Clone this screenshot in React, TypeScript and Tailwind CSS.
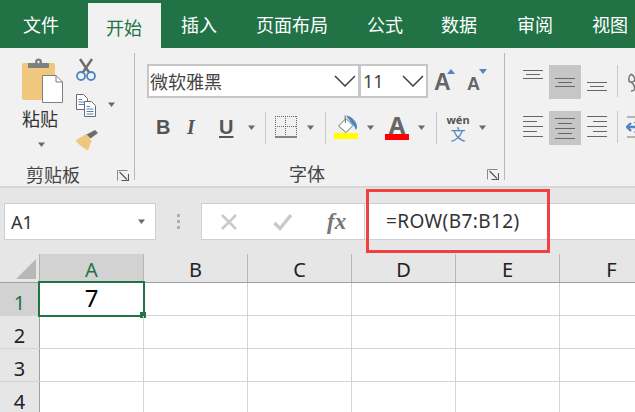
import React from "react";

const CJK = "font-['Noto_Sans_CJK_SC','Noto_Sans',sans-serif]";
const LATIN = "font-['Noto_Sans','Noto_Sans_CJK_SC',sans-serif]";

function Caret({ className = "" }: { className?: string }) {
  return (
    <svg width="10" height="6" viewBox="0 0 10 6" className={`shrink-0 ${className}`}>
      <path d="M1 0.5h7L4.5 5z" fill="#6a6a6a" />
    </svg>
  );
}

function Chevron({ className = "" }: { className?: string }) {
  return (
    <svg width="22" height="12" viewBox="0 0 22 12" className={`shrink-0 ${className}`}>
      <path d="M1 1 L11 11 L21 1" fill="none" stroke="#404040" strokeWidth="1.5" />
    </svg>
  );
}

function Launcher({ className = "" }: { className?: string }) {
  return (
    <svg width="12" height="11" viewBox="0 0 12 11" className={`shrink-0 ${className}`}>
      <path d="M0.5 10.5V0.5H10.5" fill="none" stroke="#8a8a8a" />
      <path d="M2.5 2 L10 9.5 M4.5 10.5H11.5V4" fill="none" stroke="#555" strokeWidth="1.1" />
    </svg>
  );
}

function Paste() {
  return (
    <svg width="43" height="46" viewBox="0 0 43 46" className="shrink-0">
      <rect x="0" y="5" width="33" height="37" rx="2" fill="#efc77f" />
      <rect x="6" y="5" width="21" height="5" rx="1" fill="#7f7f7f" />
      <circle cx="16.5" cy="4" r="3.5" fill="#7f7f7f" />
      <circle cx="16.5" cy="4" r="1.2" fill="#f1f1f1" />
      <path d="M20.5 17.5H34L40.5 24V44.5H20.5Z" fill="#fff" stroke="#7f7f7f" />
      <path d="M34 17.5V24H40.5" fill="none" stroke="#7f7f7f" />
    </svg>
  );
}

function Scissors() {
  return (
    <svg width="22" height="23" viewBox="0 0 22 23" className="shrink-0">
      <path d="M5 1 L14.5 15 M17 1 L7.5 15" stroke="#6d6d6d" strokeWidth="2.4" fill="none" />
      <circle cx="6" cy="18" r="4" fill="none" stroke="#4f86c0" strokeWidth="1.8" />
      <circle cx="16" cy="18" r="4" fill="none" stroke="#4f86c0" strokeWidth="1.8" />
    </svg>
  );
}

function CopyIcon() {
  return (
    <svg width="22" height="24" viewBox="0 0 22 24" className="shrink-0">
      <path d="M1.5 1.5H8.5L12.5 5.5V16.5H1.5Z" fill="#fff" stroke="#6a6a6a" />
      <path d="M3.5 6.5H7M3.5 9H10M3.5 11.5H10" stroke="#4f86c0" />
      <path d="M9.5 8.5H16.5L20.5 12.5V23.5H9.5Z" fill="#fff" stroke="#6a6a6a" />
      <path d="M11.5 13.5H15M11.5 16H18.5M11.5 18.5H18.5M11.5 21H18.5" stroke="#4f86c0" />
    </svg>
  );
}

function Brush() {
  return (
    <svg width="24" height="21" viewBox="0 0 24 21" className="shrink-0">
      <path d="M0.5 10.5 L11 4 L16.5 11 L13 20.5 C8 18 3.5 14.5 0.5 10.5Z" fill="#efc77f" />
      <path d="M11.5 4.5 L15.5 8.5 L23 3 L20 0Z" fill="#6d6d6d" />
    </svg>
  );
}

function BorderIcon() {
  return (
    <svg width="22" height="22" viewBox="0 0 22 22" className="shrink-0">
      <path d="M0 0.5H22M0.5 0V20M21.5 0V20M10.5 0V20M0 10.5H22" fill="none" stroke="#666" strokeDasharray="1 1" />
      <path d="M0 21H22" stroke="#555" strokeWidth="1.4" />
    </svg>
  );
}

function FillIcon() {
  return (
    <svg width="25" height="25" viewBox="0 0 25 25" className="shrink-0 mb-[2px]">
      <path d="M4.5 11 L12 3.5 L19 10.5 L12 17.5Z" fill="#fff" stroke="#6d6d6d" />
      <path d="M11 0.5 L11.5 8" stroke="#6d6d6d" />
      <path d="M12 0.5 C17 1 21 5 22.5 9 C23.5 12 23 14 21.5 15 C21 12 20 10.5 18.5 9.5Z" fill="#4f86c0" />
      <rect x="0" y="18" width="24" height="6" fill="#ffff00" />
    </svg>
  );
}

function AlignLines({ widths, align, gap = 4 }: { widths: number[]; align: "start" | "center" | "end"; gap?: number }) {
  const cls = align === "start" ? "items-start" : align === "center" ? "items-center" : "items-end";
  return (
    <div className={`flex flex-col w-[20px] ${cls}`} style={{ gap }}>
      {widths.map((w, i) => (
        <div key={i} className="h-px bg-[#666]" style={{ width: w }} />
      ))}
    </div>
  );
}

const Sep = ({ className = "" }: { className?: string }) => <div className={`w-px shrink-0 bg-[#c8c8c8] ${className}`} />;

const tabs: [string, string][] = [
  ["文件", "ml-[4px] px-[19px] text-white"],
  ["开始", "ml-[10px] pl-[18px] pr-[19px] mt-[3px] h-[45px] bg-[#f1f1f1] text-[#217346]"],
  ["插入", "ml-[1px] pl-[19px] pr-[19px] text-white"],
  ["页面布局", "ml-[1px] px-[19px] text-white"],
  ["公式", "pl-[20px] pr-[18px] text-white"],
  ["数据", "pl-[20px] pr-[20px] text-white"],
  ["审阅", "pl-[20px] pr-[19px] text-white"],
  ["视图", "pl-[20px] pr-[20px] text-white"],
];

const cols = ["A", "B", "C", "D", "E", "F"];
const rows = [1, 2, 3, 4];

export default function App() {
  return (
    <div className={`w-[635px] h-[412px] overflow-hidden relative bg-white ${CJK}`}>
      {/* Tabs */}
      <div className="h-[48px] bg-[#217346] flex whitespace-nowrap">
        {tabs.map(([t, c]) => (
          <div key={t} className={`flex items-center justify-center h-[48px] text-[18px] shrink-0 ${c}`}>
            <span className="leading-none">{t}</span>
          </div>
        ))}
      </div>

      {/* Ribbon */}
      <div className="h-[140px] bg-[#f1f1f1] border-b-2 border-[#d6d6d6] flex">
        {/* Clipboard */}
        <div className="w-[134px] shrink-0 flex flex-col">
          <div className="h-[114px] shrink-0 flex">
            <div className="w-[75px] pl-[22px] pt-[10px] flex flex-col items-start">
              <Paste />
              <div className="text-[18px] leading-[24px] text-[#333] mt-[2px]">粘贴</div>
              <Caret className="ml-[15px] mt-[12px]" />
            </div>
            <div className="pt-[10px] flex flex-col">
              <Scissors />
              <div className="flex items-center mt-[12px]">
                <CopyIcon />
                <Caret className="ml-[10px]" />
              </div>
              <div className="mt-[13px]"><Brush /></div>
            </div>
          </div>
          <div className="flex-1 flex items-start">
            <div className="ml-[26px] text-[18px] leading-[24px] text-[#444]">剪贴板</div>
            <Launcher className="ml-[37px] mt-[8px]" />
          </div>
        </div>
        <Sep className="mt-[5px] h-[127px] !bg-[#b8b8b8]" />

        {/* Font */}
        <div className="w-[369px] shrink-0 flex flex-col">
          <div className="h-[64px] shrink-0 pt-[16px] pl-[12px] flex items-start">
            <div className="w-[213px] h-[34px] bg-white border-2 border-[#c6c6c6] flex items-center pl-[1px] pr-[2px] justify-between">
              <span className="text-[18px] leading-none text-[#444]">微软雅黑</span>
              <Chevron />
            </div>
            <div className="w-[69px] h-[34px] -ml-[1px] bg-white border-2 border-[#c6c6c6] flex items-center justify-between pl-[2px] pr-[2px]">
              <span className={`text-[18px] leading-none text-[#444] ${LATIN}`}>11</span>
              <Chevron />
            </div>
            <div className="relative w-[16px] h-[26px] ml-[6px] mt-[5px]">
              <span className="text-[23px] leading-[26px] font-bold text-[#666] font-['Liberation_Sans',sans-serif]">A</span>
              <svg width="8" height="5" viewBox="0 0 8 5" className="absolute top-[0px] right-[-5px]"><path d="M0 5L4 0L8 5Z" fill="#4f86c0" /></svg>
            </div>
            <div className="relative w-[14px] h-[26px] ml-[17px] mt-[5px]">
              <span className="text-[18px] leading-[30px] font-bold text-[#666] font-['Liberation_Sans',sans-serif]">A</span>
              <svg width="8" height="5" viewBox="0 0 8 5" className="absolute top-[0px] right-[-6px]"><path d="M0 0H8L4 5Z" fill="#4f86c0" /></svg>
            </div>
          </div>
          <div className="h-[32px] shrink-0 pl-[21px] flex items-center font-['Liberation_Sans',sans-serif] text-[#555]">
            <span className="w-[31px] text-[20px] font-bold leading-none -mt-[3px]">B</span>
            <span className="w-[32px] text-[20px] font-bold italic font-['Liberation_Serif',serif] leading-none -mt-[3px]">I</span>
            <span className="w-[27px] text-[20px] font-bold leading-none underline underline-offset-2 -mt-[3px]">U</span>
            <Caret className="ml-[1px] mr-[8px]" />
            <Sep className="h-[32px]" />
            <div className="ml-[9px] -mt-[3px]"><BorderIcon /></div>
            <Caret className="ml-[9px] mr-[9px]" />
            <Sep className="h-[32px]" />
            <div className="ml-[8px] flex"><FillIcon /></div>
            <Caret className="ml-[7px]" />
            <div className="relative w-[24px] h-[25px] ml-[9px] mb-[2px] flex justify-center shrink-0">
              <span className={`text-[24px] font-bold leading-[20px] text-[#666] ${LATIN}`}>A</span>
              <div className="absolute left-0 bottom-0 w-[24px] h-[6px] bg-[#ff0000]" />
            </div>
            <Caret className="ml-[8px] mr-[9px]" />
            <Sep className="h-[32px]" />
            <div className="ml-[9px] w-[24px] flex flex-col items-center -mt-[2px]">
              <span className="text-[11px] leading-[13px] font-bold text-[#555] font-['Noto_Sans',sans-serif]">wén</span>
              <span className={`text-[15px] leading-[15px] text-[#4f86c0] ${CJK}`}>文</span>
            </div>
            <Caret className="ml-[8px]" />
          </div>
          <div className="flex-1 pt-[17px] flex items-start">
            <span className="ml-[154px] text-[18px] leading-[24px] text-[#444]">字体</span>
            <Launcher className="ml-[162px] mt-[8px]" />
          </div>
        </div>
        <Sep className="mt-[5px] h-[127px] !bg-[#b8b8b8]" />

        {/* Alignment */}
        <div className="flex-1 pt-[17px] pl-[18px]">
          <div className="flex items-start">
            <div className="w-[26px] pt-[5px]"><AlignLines widths={[20, 14, 20]} align="center" gap={3} /></div>
            <div className="w-[32px] h-[34px] bg-[#c6c6c6] flex justify-center items-center"><AlignLines widths={[20, 14, 20]} align="center" gap={3} /></div>
            <div className="w-[26px] pl-[6px] pt-[17px]"><AlignLines widths={[20, 14, 20]} align="center" gap={3} /></div>
            <Sep className="ml-[10px] h-[32px]" />
            <svg width="17" height="22" viewBox="0 0 17 22" className="ml-[10px] mt-[6px] shrink-0">
              <path d="M3 3 C8 6 8 11 3 11 C0 11 0 6 3 3 M3 11 C8 15 8 20 3 20" fill="none" stroke="#777" strokeWidth="1.5" />
            </svg>
          </div>
          <div className="flex items-start mt-[12px]">
            <div className="w-[26px] pt-[5px]"><AlignLines widths={[20, 14, 20, 14, 20]} align="start" /></div>
            <div className="w-[32px] h-[34px] bg-[#c6c6c6] flex justify-center items-center"><AlignLines widths={[20, 14, 20, 14, 20]} align="center" /></div>
            <div className="w-[26px] pl-[6px] pt-[5px]"><AlignLines widths={[20, 14, 20, 14, 20]} align="end" /></div>
            <Sep className="ml-[10px] h-[32px]" />
            <svg width="17" height="26" viewBox="0 0 17 26" className="ml-[8px] mt-[4px] shrink-0">
              <path d="M1 12H9M5 8L1 12L5 16" fill="none" stroke="#4f86c0" strokeWidth="2.4" />
              <path d="M1 2H17M8 7.5H17M11 12H17M8 17H17M1 22H17" stroke="#777" />
            </svg>
          </div>
        </div>
      </div>

      {/* Formula bar */}
      <div className="h-[66px] bg-[#e6e6e6] flex items-start pt-[15px] pl-[4px]">
        <div className="w-[152px] h-[37px] bg-white border border-[#cfcfcf] flex items-center justify-between pl-[6px] pr-[8px]">
          <span className={`text-[18px] leading-none text-[#333] ${LATIN}`}>A1</span>
          <Caret />
        </div>
        <div className="w-[45px] h-[37px] flex flex-col items-center justify-center gap-[3px]">
          <div className="w-[3px] h-[3px] bg-[#b0b0b0]" />
          <div className="w-[3px] h-[3px] bg-[#b0b0b0]" />
          <div className="w-[3px] h-[3px] bg-[#b0b0b0]" />
        </div>
        <div className="flex-1 h-[37px] bg-white border-y border-l border-[#cfcfcf] flex items-center">
          <div className="w-[163px] h-full border-r border-[#cfcfcf] flex items-center shrink-0">
            <svg width="18" height="18" viewBox="0 0 18 18" className="ml-[18px] shrink-0">
              <path d="M2 2L16 16M16 2L2 16" stroke="#c9c9c9" strokeWidth="2.6" />
            </svg>
            <svg width="20" height="18" viewBox="0 0 20 18" className="ml-[35px] shrink-0">
              <path d="M1.5 10L7 15.5L18 2" fill="none" stroke="#c9c9c9" strokeWidth="3.4" />
            </svg>
            <span className="ml-[34px] text-[23px] leading-none font-bold italic text-[#777] font-['Liberation_Serif',serif]">fx</span>
          </div>
          <span className={`ml-[21px] text-[19px] leading-none tracking-[0.4px] text-[#333] ${LATIN}`}>=ROW(B7:B12)</span>
        </div>
      </div>

      {/* Grid */}
      <div className={LATIN}>
        <div className="flex h-[29px] bg-[#e6e6e6] border-b border-[#9f9f9f]">
          <div className="w-[40px] shrink-0 border-r border-[#b0b0b0] flex items-end pl-[16px] pb-[3px]">
            <svg width="20" height="20" viewBox="0 0 20 20" className="shrink-0"><path d="M20 0V20H0Z" fill="#b7b7b7" /></svg>
          </div>
          {cols.map((c, i) => (
            <div key={c} className={`w-[104px] shrink-0 pt-[4px] flex items-center justify-center text-[20px] leading-none border-r border-[#b8b8b8] ${i === 0 ? "bg-[#d2d2d2] text-[#217346]" : "text-[#222]"}`}>
              {c}
            </div>
          ))}
        </div>
        {rows.map((r) => (
          <div key={r} className="flex h-[33px] border-b border-[#d4d4d4]">
            <div className={`w-[40px] shrink-0 pt-[7px] flex items-center justify-center text-[20px] leading-none border-r border-[#9f9f9f] ${r === 1 ? "bg-[#d2d2d2] text-[#217346]" : "bg-[#e6e6e6] text-[#222]"}`}>
              {r}
            </div>
            {cols.map((c, i) => (
              <div key={c} className="w-[104px] shrink-0 border-r border-[#d4d4d4] relative">
                {r === 1 && i === 0 && (
                  <div className="absolute -left-[2px] -top-[2px] w-[107px] h-[36px] border-2 border-[#217346] flex items-center justify-center text-[24px] leading-none text-black">
                    <span className="-mt-[3px]">7</span>
                    <div className="absolute -right-[3px] -bottom-[3px] w-[6px] h-[6px] bg-[#217346]" />
                  </div>
                )}
              </div>
            ))}
          </div>
        ))}
      </div>

      {/* Red highlight */}
      <div className="absolute left-[366px] top-[189px] w-[184px] h-[64px] border-[3px] border-[#f04040]" />
    </div>
  );
}
